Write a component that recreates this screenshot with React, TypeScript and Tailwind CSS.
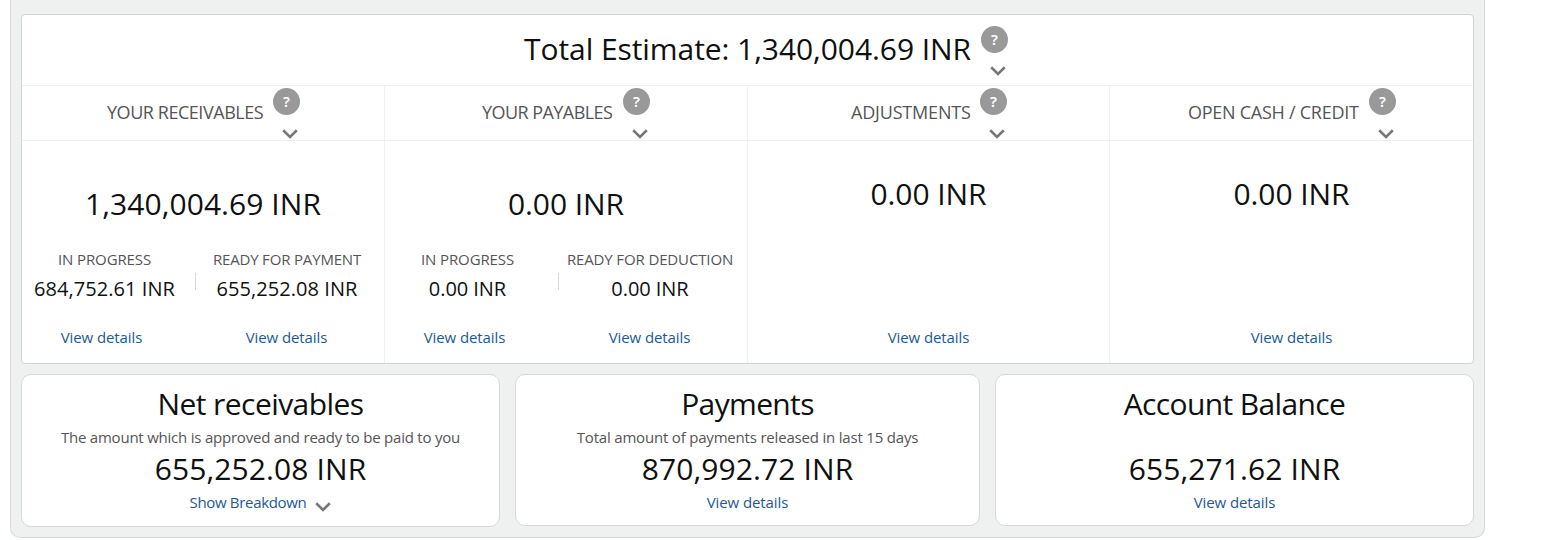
import type { ReactNode } from "react";

const LABEL = "whitespace-nowrap text-[15px] leading-5 text-[#555555]";
const LINK = "cursor-pointer whitespace-nowrap text-[15px] leading-5 text-[#1b5a96]";
const HEADING = "whitespace-nowrap text-[30px] leading-10";
const AMOUNT = "whitespace-nowrap text-[20px] leading-6";

function Chevron({ className = "" }: { className?: string }) {
  return (
    <svg viewBox="0 0 16 10" width="16" height="10" className={`shrink-0 ${className}`} aria-hidden="true">
      <path d="M1.2 1.3 L8 7.9 L14.8 1.3" fill="none" stroke="#777777" strokeWidth="2.6" />
    </svg>
  );
}

function Help({ chevronClass }: { chevronClass: string }) {
  return (
    <div className="flex w-[27px] shrink-0 flex-col items-start">
      <span className="flex h-[27px] w-[27px] items-center justify-center rounded-full bg-[#999999] font-['Noto_Sans',sans-serif] text-[15px] leading-none font-semibold text-white">
        ?
      </span>
      <Chevron className={chevronClass} />
    </div>
  );
}

function ColumnTitle({ title, className }: { title: string; className: string }) {
  return (
    <div className="flex h-[55px] justify-start border-b border-[#f0f1f1] pt-[2px]">
      <h3 className={`mt-[12px] shrink-0 whitespace-nowrap text-[18px] leading-6 text-[#555555] ${className}`}>{title}</h3>
      <Help chevronClass="mt-[14px] ml-[9px]" />
    </div>
  );
}

type Part = { label: string; amount: string; labelClass: string; amountClass: string };

function SplitBody({ total, totalClass, left, right }: { total: string; totalClass: string; left: Part; right: Part }) {
  return (
    <div className="pt-[43px]">
      <div className={`text-center ${HEADING} ${totalClass}`}>{total}</div>
      <div className="mt-[25px] grid grid-cols-[165px_17px_166px]">
        <div className="flex flex-col items-center gap-[8px]">
          <span className={`${LABEL} ${left.labelClass}`}>{left.label}</span>
          <span className={`${AMOUNT} ${left.amountClass}`}>{left.amount}</span>
        </div>
        <div className="mt-6 ml-[8px] h-[17px] w-px bg-[#d5d9d9]" />
        <div className="flex flex-col items-center gap-[8px]">
          <span className={`${LABEL} ${right.labelClass}`}>{right.label}</span>
          <span className={`${AMOUNT} ${right.amountClass}`}>{right.amount}</span>
        </div>
      </div>
      <div className="mt-[26px] grid grid-cols-[159px_23px_165px] text-center">
        <a className={`${LINK} tracking-[-0.09px]`}>View details</a>
        <span />
        <a className={`${LINK} tracking-[-0.09px]`}>View details</a>
      </div>
    </div>
  );
}

function SimpleBody() {
  return (
    <div className="flex flex-col items-center pt-[33px]">
      <span className={`${HEADING} tracking-[-0.08px]`}>0.00 INR</span>
      <a className={`mt-[113px] ${LINK} tracking-[-0.09px]`}>View details</a>
    </div>
  );
}

function Card({ title, titleClass, note, noteClass = "", amount, className, children }: {
  title: string; titleClass: string; note?: string; noteClass?: string; amount: string; className: string; children: ReactNode;
}) {
  return (
    <section className={`flex flex-col items-center rounded-[10px] border border-[#d5d9d9] bg-white pt-[9px] ${className}`}>
      <h2 className={`${HEADING} ${titleClass}`}>{title}</h2>
      <p className={`mt-[3px] h-5 ${LABEL} ${noteClass}`}>{note}</p>
      <div className={`mt-[2px] ${HEADING} tracking-[0.1px]`}>{amount}</div>
      <div className="mt-[3px] flex items-start">{children}</div>
    </section>
  );
}

export default function App() {
  return (
    <div className="h-[540px] overflow-hidden bg-white pl-[10px] font-['Open_Sans',sans-serif] font-[460] text-[#0f1111]">
      <main className="h-[538px] w-[1475px] rounded-b-[10px] border border-t-0 border-[#d5d9d9] bg-[#eff1f1] px-[10px] pt-[14px]">
        <section className="h-[350px] w-[1453px] overflow-hidden rounded-[4px] border border-[#d0d4d4] bg-white">
          <header className="flex h-[71px] border-b border-[#f0f1f1] pt-[11px]">
            <h1 className={`mt-[3px] ml-[502px] w-[457px] shrink-0 ${HEADING} tracking-[-0.07px]`}>
              Total Estimate: 1,340,004.69 INR
            </h1>
            <Help chevronClass="mt-[13px] ml-[9px]" />
          </header>
          <div className="grid h-[277px] grid-cols-[363px_363px_362px_363px]">
            <div className="border-r border-[#f0f1f1]">
              <ColumnTitle title="YOUR RECEIVABLES" className="ml-[85px] w-[166px] tracking-[-0.45px]" />
              <SplitBody
                total="1,340,004.69 INR"
                totalClass="tracking-[0.06px]"
                left={{ label: "IN PROGRESS", amount: "684,752.61 INR", labelClass: "tracking-[-0.1px]", amountClass: "tracking-[0.05px]" }}
                right={{ label: "READY FOR PAYMENT", amount: "655,252.08 INR", labelClass: "tracking-[-0.17px]", amountClass: "tracking-[0.07px]" }}
              />
            </div>
            <div className="border-r border-[#f0f1f1]">
              <ColumnTitle title="YOUR PAYABLES" className="ml-[97px] w-[141px] tracking-[-0.55px]" />
              <SplitBody
                total="0.00 INR"
                totalClass="tracking-[-0.08px]"
                left={{ label: "IN PROGRESS", amount: "0.00 INR", labelClass: "tracking-[-0.1px]", amountClass: "tracking-[-0.05px]" }}
                right={{ label: "READY FOR DEDUCTION", amount: "0.00 INR", labelClass: "tracking-[-0.13px]", amountClass: "tracking-[-0.05px]" }}
              />
            </div>
            <div className="border-r border-[#f0f1f1]">
              <ColumnTitle title="ADJUSTMENTS" className="ml-[103px] w-[129px] tracking-[-0.18px]" />
              <SimpleBody />
            </div>
            <div>
              <ColumnTitle title="OPEN CASH / CREDIT" className="ml-[78px] w-[181px] tracking-[-0.26px]" />
              <SimpleBody />
            </div>
          </div>
        </section>
        <div className="mt-[10px] flex items-start">
          <Card
            className="h-[153px] w-[479px]"
            title="Net receivables"
            titleClass="tracking-[-0.56px]"
            note="The amount which is approved and ready to be paid to you"
            noteClass="tracking-[-0.22px]"
            amount="655,252.08 INR"
          >
            <a className={`${LINK} tracking-[-0.32px]`}>Show Breakdown</a>
            <Chevron className="mt-[10px] ml-[9px]" />
          </Card>
          <Card
            className="ml-[15px] h-[152px] w-[465px]"
            title="Payments"
            titleClass="tracking-[-0.65px]"
            note="Total amount of payments released in last 15 days"
            noteClass="tracking-[-0.19px]"
            amount="870,992.72 INR"
          >
            <a className={`${LINK} tracking-[-0.09px]`}>View details</a>
          </Card>
          <Card
            className="ml-[15px] h-[152px] w-[479px]"
            title="Account Balance"
            titleClass="tracking-[-0.62px]"
            amount="655,271.62 INR"
          >
            <a className={`${LINK} tracking-[-0.09px]`}>View details</a>
          </Card>
        </div>
      </main>
    </div>
  );
}
